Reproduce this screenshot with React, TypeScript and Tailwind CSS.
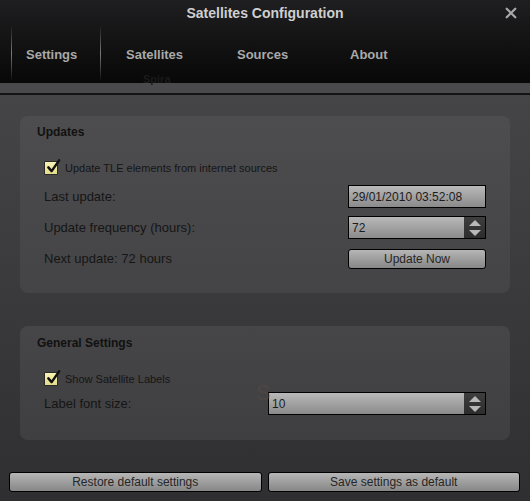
import * as React from 'react';

const font = { fontFamily: '"Liberation Sans", Arial, sans-serif' };

function CheckBox() {
  return (
    <div className="relative h-[14px] w-[14px] shrink-0 rounded-[1px] border border-[#2a2a2a] bg-gradient-to-b from-[#f7f2b4] to-[#e4dc8a]">
      <svg
        viewBox="0 0 16 16"
        className="absolute -top-[4px] left-[1px] h-[16px] w-[15px]"
      >
        <path
          d="M2.5 9.5 L6 13.5 L14 2"
          fill="none"
          stroke="#111"
          strokeWidth="2.6"
          strokeLinecap="round"
          strokeLinejoin="round"
        />
      </svg>
    </div>
  );
}

function TextField({ value }: { value: string }) {
  return (
    <div className="flex h-[23px] w-[138px] items-center border border-black bg-gradient-to-b from-[#b9b9b9] to-[#8b8b8b] pl-[3px] text-[12px] text-[#1c1c1c]">
      {value}
    </div>
  );
}

function SpinBox({ value, width }: { value: string; width: string }) {
  return (
    <div
      className={`flex h-[23px] ${width} items-stretch border border-black bg-gradient-to-b from-[#b9b9b9] to-[#8b8b8b] text-[12px] text-[#1c1c1c]`}
    >
      <div className="flex flex-1 items-center pl-[3px]">{value}</div>
      <div className="flex w-[21px] flex-col items-center justify-center gap-[4px] bg-gradient-to-b from-[#3e3e3e] to-[#2c2c2c]">
        <svg viewBox="0 0 12 6" className="h-[6px] w-[12px]">
          <path d="M0 6 L6 0 L12 6 Z" fill="#b8b8b8" />
        </svg>
        <svg viewBox="0 0 12 6" className="h-[6px] w-[12px]">
          <path d="M0 0 L12 0 L6 6 Z" fill="#b8b8b8" />
        </svg>
      </div>
    </div>
  );
}

function PushButton({
  label,
  className,
}: {
  label: string;
  className: string;
}) {
  return (
    <div
      className={`flex items-center justify-center rounded-[3px] border border-black bg-gradient-to-b from-[#b6b6b6] to-[#878787] text-[12px] text-[#262626] ${className}`}
    >
      {label}
    </div>
  );
}

export default function App() {
  return (
    <div
      className="flex h-[501px] w-[530px] flex-col overflow-hidden bg-[#2e2e30]"
      style={font}
    >
      {/* header */}
      <div className="relative h-[83px] shrink-0 bg-gradient-to-b from-[#1f1f21] to-[#080808]">
        <div className="flex h-[27px] items-center justify-center text-[14px] font-bold text-[#cfcfcf]">
          Satellites Configuration
        </div>
        <svg
          viewBox="0 0 14 14"
          className="absolute top-[7px] right-[13px] h-[12px] w-[12px]"
        >
          <path
            d="M2 2 L12 12 M12 2 L2 12"
            stroke="#a8a8a8"
            strokeWidth="2.6"
            strokeLinecap="round"
          />
        </svg>
        <div className="flex h-[55px] pl-[11px] text-[13px] font-bold text-[#a9a9a9]">
          <div className="-mt-[2px] w-px bg-gradient-to-b from-transparent via-[#7a7a7a] to-transparent" />
          <div className="flex w-[88px] items-center pl-[14px]">Settings</div>
          <div className="-mt-[2px] w-px bg-gradient-to-b from-transparent via-[#7a7a7a] to-transparent" />
          <div className="flex w-[110px] items-center pl-[25px]">Satellites</div>
          <div className="flex w-[113px] items-center pl-[26px]">Sources</div>
          <div className="flex items-center pl-[26px]">About</div>
        </div>
        <span className="absolute top-[71px] left-[143px] text-[11px] font-bold text-[#1a1a1a]">
          Spira
        </span>
      </div>

      {/* band */}
      <div className="h-[12px] shrink-0 border-b-2 border-[#141414] bg-[#4a4a4c]" />

      {/* body */}
      <div className="flex flex-1 flex-col bg-gradient-to-b from-[#454547] to-[#2f2f31]">
        <div className="mx-[20px] mt-[21px] h-[177px] rounded-[8px] bg-gradient-to-b from-[#4d4d4f] to-[#444446] pt-[9px] pr-[24px] pl-[17px]">
          <div className="h-[14px] text-[12px] leading-[14px] font-bold text-[#111]">
            Updates
          </div>
          <div className="mt-[22px] flex h-[14px] items-center gap-[7px] pl-[7px] text-[11px] text-[#151515]">
            <CheckBox />
            Update TLE elements from internet sources
          </div>
          <div className="mt-[10px] flex items-center justify-between pl-[7px] text-[13px] text-[#151515]">
            <span>Last update:</span>
            <TextField value="29/01/2010 03:52:08" />
          </div>
          <div className="mt-[8px] flex items-center justify-between pl-[7px] text-[13px] text-[#151515]">
            <span>Update frequency (hours):</span>
            <SpinBox value="72" width="w-[138px]" />
          </div>
          <div className="mt-[10px] flex items-center justify-between pl-[7px] text-[13px] text-[#151515]">
            <span>Next update: 72 hours</span>
            <PushButton label="Update Now" className="h-[20px] w-[138px]" />
          </div>
        </div>

        <div className="relative mx-[20px] mt-[33px] h-[114px] rounded-[8px] bg-gradient-to-b from-[#464648] to-[#3f3f41] pt-[10px] pr-[24px] pl-[17px]">
          <div className="h-[14px] text-[12px] leading-[14px] font-bold text-[#111]">
            General Settings
          </div>
          <div className="mt-[22px] flex h-[14px] items-center gap-[7px] pl-[7px] text-[11px] text-[#151515]">
            <CheckBox />
            Show Satellite Labels
          </div>
          <div className="mt-[6px] flex items-center justify-between pl-[7px] text-[13px] text-[#151515]">
            <span>Label font size:</span>
            <SpinBox value="10" width="w-[218px]" />
          </div>
          <span className="absolute top-[50px] left-[236px] text-[22px] text-[#5a4a44] opacity-50">
            S
          </span>
        </div>

        <div className="mt-[32px] flex gap-[6px] px-[9px] pr-[10px]">
          <PushButton label="Restore default settings" className="h-[20px] flex-1" />
          <PushButton label="Save settings as default" className="h-[20px] flex-1" />
        </div>
      </div>
    </div>
  );
}
